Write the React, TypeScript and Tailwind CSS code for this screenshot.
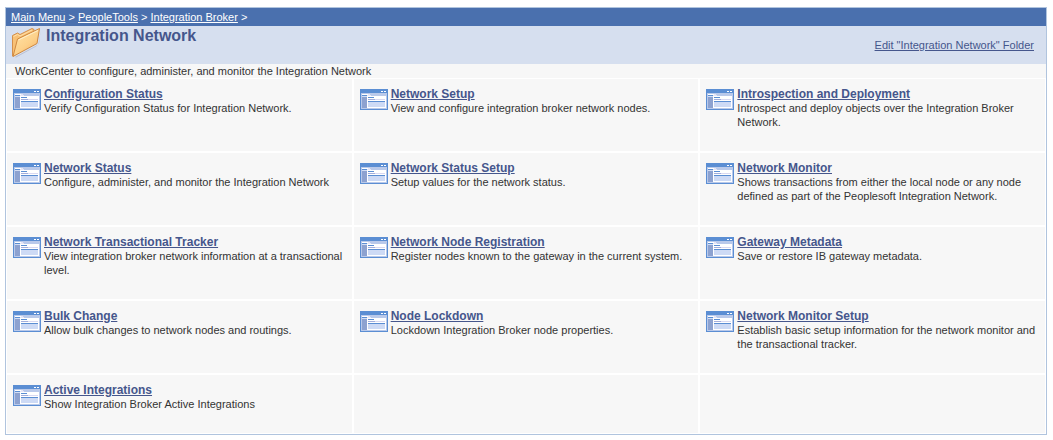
const trail = ["Main Menu", "PeopleTools", "Integration Broker"];

const entries = [
  { title: "Configuration Status", text: "Verify Configuration Status for Integration Network." },
  { title: "Network Setup", text: "View and configure integration broker network nodes." },
  { title: "Introspection and Deployment", text: "Introspect and deploy objects over the Integration Broker Network." },
  { title: "Network Status", text: "Configure, administer, and monitor the Integration Network" },
  { title: "Network Status Setup", text: "Setup values for the network status." },
  { title: "Network Monitor", text: "Shows transactions from either the local node or any node defined as part of the Peoplesoft Integration Network." },
  { title: "Network Transactional Tracker", text: "View integration broker network information at a transactional level." },
  { title: "Network Node Registration", text: "Register nodes known to the gateway in the current system." },
  { title: "Gateway Metadata", text: "Save or restore IB gateway metadata." },
  { title: "Bulk Change", text: "Allow bulk changes to network nodes and routings." },
  { title: "Node Lockdown", text: "Lockdown Integration Broker node properties." },
  { title: "Network Monitor Setup", text: "Establish basic setup information for the network monitor and the transactional tracker." },
  { title: "Active Integrations", text: "Show Integration Broker Active Integrations" },
];

const columns = 3;
const lastRowStart = Math.floor((entries.length - 1) / columns) * columns;
const blanks = Array.from({ length: lastRowStart + columns - entries.length }, (_, i) => i);

function FolderIcon() {
  return (
    <svg className="h-8 w-8 shrink-0" viewBox="0 0 32 32" aria-hidden="true">
      <defs>
        <linearGradient id="folderFront" x1="0" y1="0" x2="0.8" y2="1">
          <stop offset="0" stopColor="#ffe6ad" />
          <stop offset="0.6" stopColor="#fdd18a" />
          <stop offset="1" stopColor="#f5b363" />
        </linearGradient>
      </defs>
      <path d="M5 31L28.500 18.500L30.500 5L29 18L26 20.500L6 31.500Z" fill="#b4bbcf" />
      <path d="M2.500 9.500L7.500 7L10 8.500L22 2.500L24 3.500V10L6 28L2.500 30Z" fill="#f8c176" stroke="#d4904c" strokeWidth="1" strokeLinejoin="round" />
      <path d="M3.500 10.500L7.500 8.500L10 10L22 4" fill="none" stroke="#ffe0a8" strokeWidth="1" />
      <path d="M7.500 13L29.500 2.500L27 17.500L3 30.500Z" fill="url(#folderFront)" stroke="#cf8840" strokeWidth="1" strokeLinejoin="round" />
      <path d="M8.500 14L28 4.500" stroke="#fff0cb" strokeWidth="1" />
    </svg>
  );
}

function WindowIcon() {
  return (
    <svg className="h-[21px] w-7 shrink-0" viewBox="0 0 28 21" shapeRendering="crispEdges" aria-hidden="true">
      <rect width="28" height="21" fill="#5b8ed3" />
      <rect x="21" y="2" width="2" height="1" fill="#fff" />
      <rect x="24" y="2" width="2" height="1" fill="#fff" />
      <rect x="1" y="4" width="26" height="16" fill="#b9c9ea" />
      <rect x="2" y="5" width="6" height="1" fill="#fff" />
      <rect x="8" y="5" width="2" height="1" fill="#e6e6f5" />
      <rect x="2" y="6" width="5" height="1" fill="#5b8ed3" />
      <rect x="7" y="6" width="4" height="1" fill="#e6e6f5" />
      <rect x="2" y="7" width="5" height="1" fill="#d3def4" />
      <rect x="2" y="8" width="5" height="11" fill="#8da2d0" />
      <rect x="7" y="7" width="19" height="12" fill="#fff" />
      <rect x="8" y="8" width="6" height="1" fill="#5b8ed3" />
      <rect x="8" y="10" width="17" height="1" fill="#d9d9f1" />
      <rect x="8" y="10" width="7" height="1" fill="#a3aedb" />
      <rect x="8" y="12" width="17" height="1" fill="#5b8ed3" />
      <rect x="8" y="13" width="17" height="5" fill="#cddaf5" />
    </svg>
  );
}

export default function App() {
  return (
    <div className="px-[5px] pt-[7px] font-['Liberation_Sans',Arial,sans-serif] text-[11px] leading-[14px] text-[#333]">
      <div className="mr-px border border-[#b0c4de]">
        <nav aria-label="Breadcrumb" className="bg-[#4a70ae] px-[5px] py-0.5 text-white">
          {trail.map((name) => (
            <span key={name}>
              <a href="#" className="underline">{name}</a>
              {" > "}
            </span>
          ))}
        </nav>
        <header className="flex min-h-[38px] items-start bg-[#d6dfef] pl-1 pr-3 text-[#45568c]">
          <FolderIcon />
          <h1 className="ml-1 grow text-base font-bold leading-5">Integration Network</h1>
          <a href="#" className="mt-3 underline">Edit "Integration Network" Folder</a>
        </header>
        <p className="bg-[#f7f7f7] pl-[9px]">WorkCenter to configure, administer, and monitor the Integration Network</p>
        <ul className="grid grid-cols-3 gap-0.5 bg-white p-px">
          {entries.map((entry, i) => (
            <li
              key={entry.title}
              className={
                "flex items-start gap-[3px] bg-[#f7f7f7] px-1.5 pt-2 " + (i < lastRowStart ? "min-h-[72px]" : "min-h-[58px]")
              }
            >
              <span className="pt-0.5">
                <WindowIcon />
              </span>
              <div>
                <h2 className="text-xs font-bold leading-[14px] text-[#45568c]">
                  <a href="#" className="underline">{entry.title}</a>
                </h2>
                <p>{entry.text}</p>
              </div>
            </li>
          ))}
          {blanks.map((n) => (
            <li key={n} className="bg-[#f7f7f7]" aria-hidden="true" />
          ))}
        </ul>
      </div>
    </div>
  );
}
